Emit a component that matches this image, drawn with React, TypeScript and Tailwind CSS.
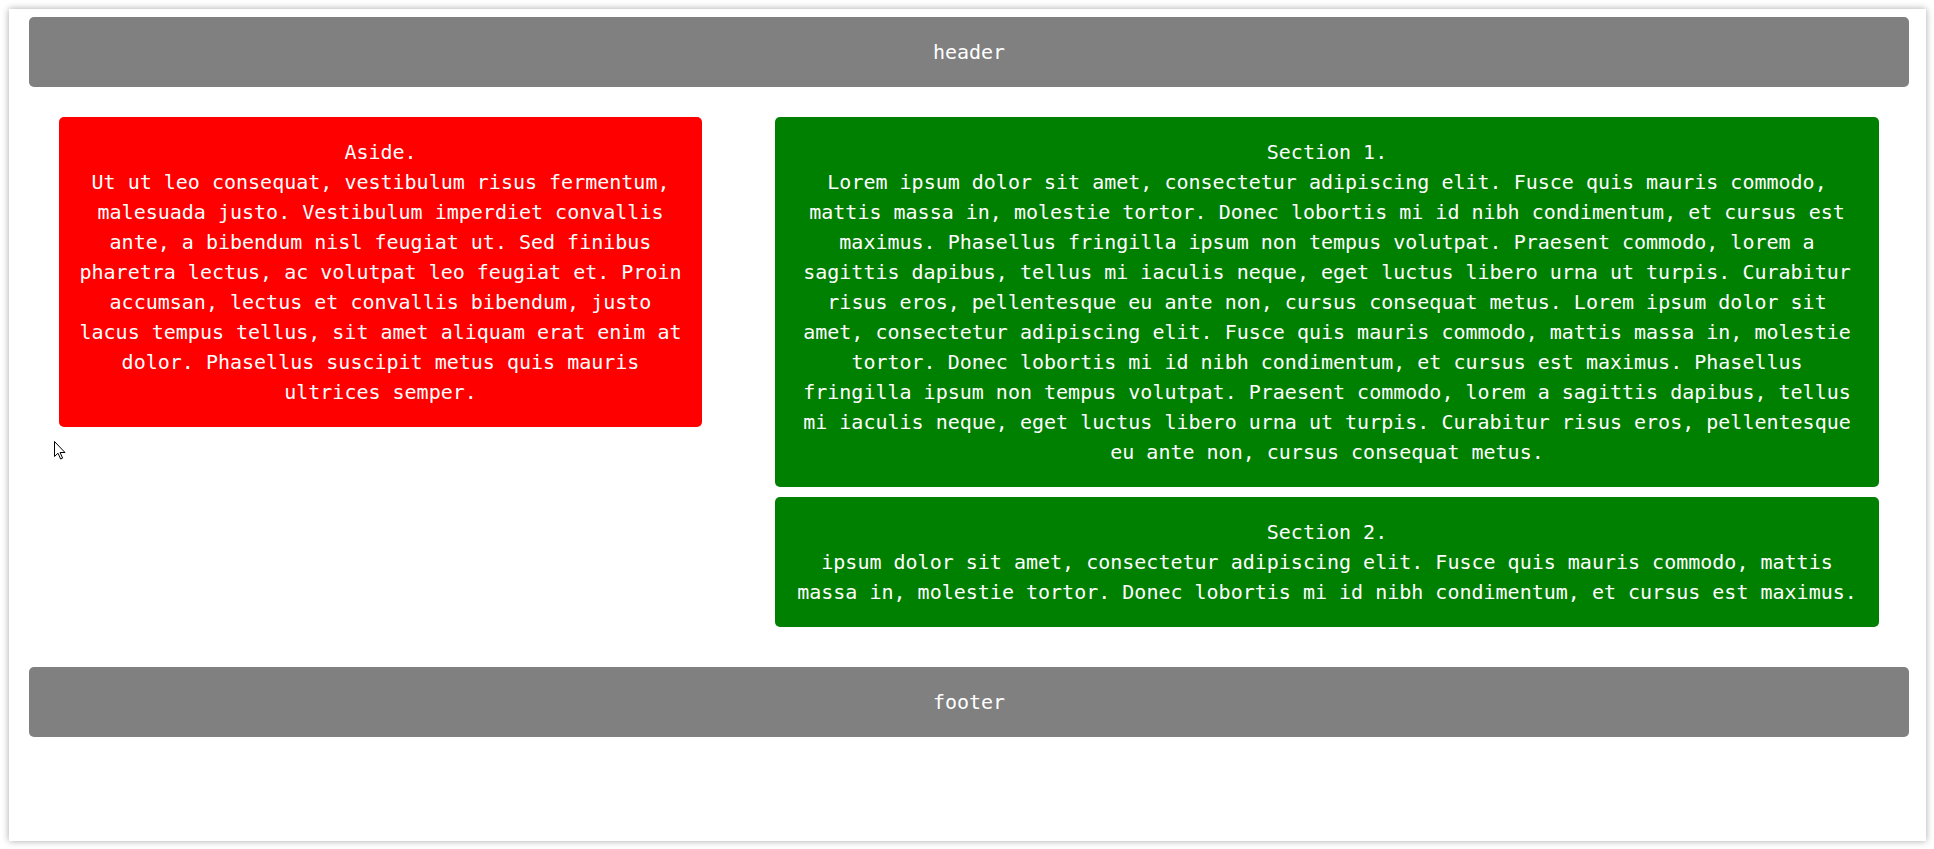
import React from 'react';

const asideText =
  'Ut ut leo consequat, vestibulum risus fermentum, malesuada justo. Vestibulum imperdiet convallis ante, a bibendum nisl feugiat ut. Sed finibus pharetra lectus, ac volutpat leo feugiat et. Proin accumsan, lectus et convallis bibendum, justo lacus tempus tellus, sit amet aliquam erat enim at dolor. Phasellus suscipit metus quis mauris ultrices semper.';

const lorem =
  'Lorem ipsum dolor sit amet, consectetur adipiscing elit. Fusce quis mauris commodo, mattis massa in, molestie tortor. Donec lobortis mi id nibh condimentum, et cursus est maximus. Phasellus fringilla ipsum non tempus volutpat. Praesent commodo, lorem a sagittis dapibus, tellus mi iaculis neque, eget luctus libero urna ut turpis. Curabitur risus eros, pellentesque eu ante non, cursus consequat metus.';

const section1 = `${lorem} ${lorem}`;

const section2 =
  'ipsum dolor sit amet, consectetur adipiscing elit. Fusce quis mauris commodo, mattis massa in, molestie tortor. Donec lobortis mi id nibh condimentum, et cursus est maximus.';

function Cursor() {
  return (
    <svg
      className="absolute left-[45px] top-[432px]"
      width="12"
      height="19"
      viewBox="0 0 12 19"
    >
      <path
        d="M0.5 0.5 L0.5 15.5 L4 12.2 L6.6 18 L8.6 17.1 L6.1 11.5 L11 11.5 Z"
        fill="#fff"
        stroke="#000"
        strokeWidth="1"
        strokeLinejoin="miter"
      />
    </svg>
  );
}

export default function App() {
  return (
    <div className="min-h-[849px] bg-white pl-[9px] pt-[9px] pr-[8px] pb-[8px] font-['DejaVu_Sans_Mono',monospace] text-[20px] leading-[30px] text-white">
      <div className="relative h-[832px] bg-white pl-[20px] pr-[17px] pt-[8px] shadow-[0_0_7px_rgba(0,0,0,0.35)]">
        {/* Header */}
        <header className="flex h-[70px] items-center justify-center rounded-[5px] bg-[#808080]">
          header
        </header>

        {/* Content */}
        <main className="flex items-start gap-[73px] px-[30px] pt-[30px] pb-[40px]">
          <aside className="w-[643px] shrink-0 rounded-[5px] bg-[#ff0000] p-[20px] text-center">
            Aside.
            <br />
            {asideText}
          </aside>

          <div className="flex flex-1 flex-col gap-[10px]">
            <section className="rounded-[5px] bg-[#008000] p-[20px] text-center">
              Section 1.
              <br />
              {section1}
            </section>
            <section className="rounded-[5px] bg-[#008000] p-[20px] text-center">
              Section 2.
              <br />
              {section2}
            </section>
          </div>
        </main>

        {/* Footer */}
        <footer className="flex h-[70px] items-center justify-center rounded-[5px] bg-[#808080]">
          footer
        </footer>

        <Cursor />
      </div>
    </div>
  );
}
